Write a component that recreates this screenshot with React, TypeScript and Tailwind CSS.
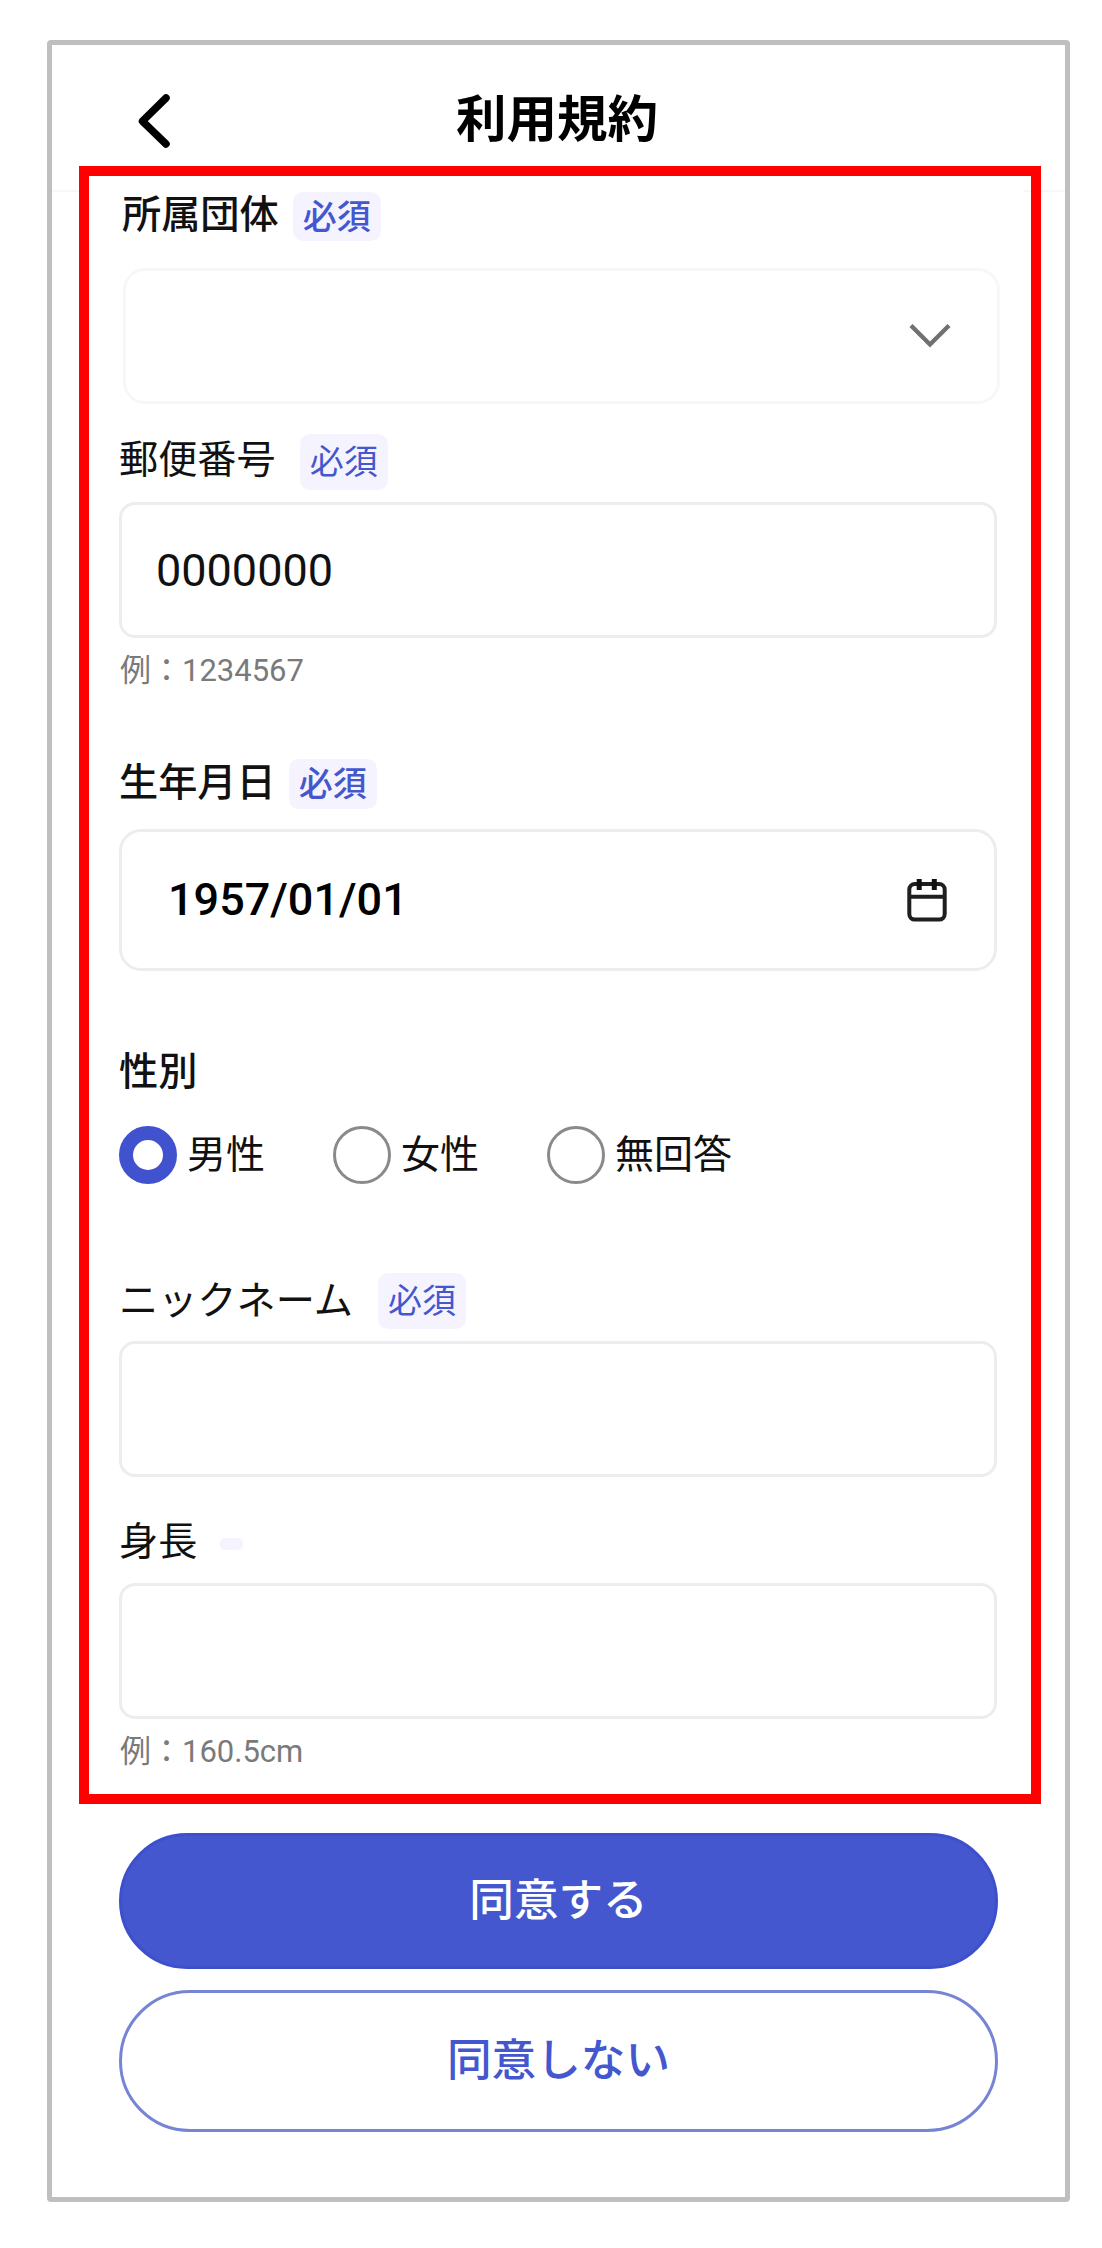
import { useState } from "react";
import { clsx } from "clsx";

const genders = ["男性", "女性", "無回答"];

const RequiredBadge = ({ className }: { className?: string }) => (
  <span
    className={clsx(
      "flex w-[88px] items-center justify-center rounded-[10px] bg-[#f5f4fe] text-[34px] leading-none text-[#4457cf]",
      className
    )}
  >
    必須
  </span>
);

const Label = ({
  className,
  children,
}: {
  className?: string;
  children: React.ReactNode;
}) => (
  <span className={clsx("text-[39.2px] text-[#111]", className)}>
    {children}
  </span>
);

const Hint = ({ children }: { children: React.ReactNode }) => (
  <p className="mt-[13px] h-10 pl-px text-[31px] leading-10 text-[#7a7a7a]">
    {children}
  </p>
);

const ChevronDown = () => (
  <svg width="42" height="26" viewBox="0 0 42 26" fill="none">
    <path d="M2 2.5 21 21.5 40 2.5" stroke="#707070" strokeWidth="4.4" />
  </svg>
);

const CalendarIcon = () => (
  <svg width="40" height="44" viewBox="0 0 40 44" fill="none" stroke="#1f1f1f">
    <rect x="2.3" y="6" width="35.4" height="35.6" rx="5.5" strokeWidth="4" />
    <path d="M3 18.8h34" strokeWidth="4" />
    <path d="M12.2 1v11M27.3 1v11" stroke="#111" strokeWidth="5" />
  </svg>
);

export default function App() {
  const [gender, setGender] = useState("男性");

  return (
    <div className="flex h-[2248px] w-[1102px] items-start bg-white pt-10 pl-[47px] font-[Roboto,'Noto_Sans_CJK_JP',sans-serif]">
      <div className="relative flex h-[2162px] w-[1023px] flex-col rounded-[4px] border-[5px] border-[#bfbfbf] bg-white">
        <header className="flex h-[147px] shrink-0 items-start border-b-2 border-[#f8f8f8] pt-[47px] pl-[84px]">
          <button type="button" aria-label="戻る">
            <svg width="36" height="58" viewBox="0 0 36 58" fill="none">
              <path
                d="M30 6 6.5 29.2 30 52"
                stroke="#000"
                strokeWidth="7.5"
                strokeLinecap="round"
                strokeLinejoin="round"
              />
            </svg>
          </button>
          <h1 className="ml-[284px] text-[50.5px] leading-[56px] font-bold text-black">
            利用規約
          </h1>
        </header>

        {/* slides up over the header rule */}
        <form className="relative -mt-4 mr-[41px] ml-[37px] flex flex-col bg-white pr-[27px] pl-[30px]">
          <div className="mt-4 flex h-[49px] gap-[14px] pl-[3px]">
            <Label className="leading-[46px] font-medium">所属団体</Label>
            <RequiredBadge className="h-[49px] font-medium" />
          </div>
          <button
            type="button"
            className="mt-[27px] -mr-[3px] ml-1 flex h-[136px] items-center justify-end rounded-[22px] border-[3px] border-[#f7f7f7] pr-[46px]"
          >
            <ChevronDown />
          </button>

          <div className="mt-[30px] flex h-14 gap-6">
            <Label className="leading-[52px]">郵便番号</Label>
            <RequiredBadge className="h-14" />
          </div>
          <input
            className="mt-3 h-[136px] rounded-2xl border-[3px] border-[#ededf0] px-[34px] text-[45px] text-[#111]"
            defaultValue="0000000"
          />
          <Hint>例：1234567</Hint>

          <div className="mt-[68px] flex h-[50px] gap-[13px]">
            <Label className="leading-[48px] font-medium">生年月日</Label>
            <RequiredBadge className="h-[50px] font-medium" />
          </div>
          <div className="mt-[20px] flex h-[142px] items-center justify-between rounded-[22px] border-[3px] border-[#ededf0] pr-[47px] pl-[46px]">
            <span className="text-[45px] font-medium text-black">
              1957/01/01
            </span>
            <CalendarIcon />
          </div>

          <div className="mt-[76px] flex h-[50px]">
            <Label className="leading-[50px] font-medium">性別</Label>
          </div>
          <div className="mt-[29px] flex h-[58px] gap-[68px]">
            {genders.map((g) => (
              <button
                key={g}
                type="button"
                onClick={() => setGender(g)}
                className="flex items-center gap-[10px]"
              >
                <span
                  className={clsx(
                    "size-[58px] rounded-full",
                    g === gender
                      ? "border-[14px] border-[#4052ce]"
                      : "border-[3px] border-[#8a8a8a]"
                  )}
                />
                <span className="text-[39px] leading-[48px] text-[#111]">
                  {g}
                </span>
              </button>
            ))}
          </div>

          <div className="mt-[89px] flex h-14 gap-[25px]">
            <Label className="leading-[56px]">ニックネーム</Label>
            <RequiredBadge className="h-14" />
          </div>
          <input className="mt-3 h-[136px] rounded-2xl border-[3px] border-[#ededf0] px-[34px] text-[45px]" />

          <div className="mt-[37px] flex h-14 gap-[23px]">
            <Label className="leading-[56px]">身長</Label>
            <span className="mt-[24px] h-3 w-[23px] rounded-[5px] bg-[#f5f4fe]" />
          </div>
          <input className="mt-[13px] h-[136px] rounded-2xl border-[3px] border-[#ededf0] px-[34px] text-[45px]" />
          <Hint>例：160.5cm</Hint>
        </form>

        <div className="mt-[61px] mr-[67px] ml-[67px] flex flex-col gap-[21px] text-[44.6px] font-medium">
          <button
            type="button"
            className="h-[136px] rounded-full border-[3px] border-[#3c4fcc] bg-[#4457cf] text-white"
          >
            同意する
          </button>
          <button
            type="button"
            className="h-[142px] rounded-full border-[3px] border-[#7685d3] text-[#4457cf]"
          >
            同意しない
          </button>
        </div>

        {/* highlight around the input area */}
        <div className="pointer-events-none absolute top-[121px] left-[27px] h-[1638px] w-[962px] border-[10px] border-[#ff0000]" />
      </div>
    </div>
  );
}
